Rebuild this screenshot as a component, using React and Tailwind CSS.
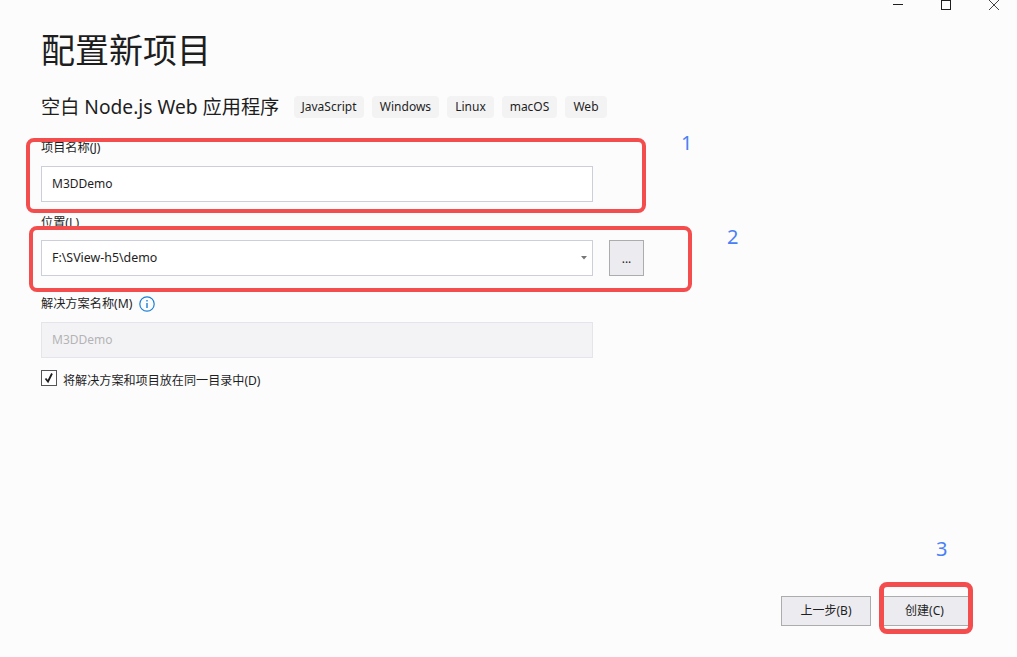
const font = { fontFamily: '"Noto Sans", "Noto Sans CJK SC", sans-serif' };

const tags = [
  { name: "JavaScript", width: "w-[70px]" },
  { name: "Windows", width: "w-[67px]" },
  { name: "Linux", width: "w-[47px]" },
  { name: "macOS", width: "w-[55px]" },
  { name: "Web", width: "w-[42px]" },
];

const Marker = ({ className }) => (
  <div className={`absolute border-[#f44d4d] rounded-lg ${className}`} />
);

const Number = ({ className, children }) => (
  <div className={`absolute text-[20px] leading-[24px] text-[#4a80f5] ${className}`}>{children}</div>
);

export default function App() {
  return (
    <div style={font} className="relative w-[1017px] h-[657px] overflow-hidden bg-[#fcfcfd] text-[#1e1e1e]">
      {/* Window buttons */}
      <div className="flex justify-end h-[10px] overflow-visible">
        <div className="flex items-start gap-[38px] pr-[18px]">
          <div className="w-[10px] h-px mt-[4px] bg-[#1e1e1e]" />
          <div className="w-[10px] h-[10px] border border-[#1e1e1e]" />
          <svg width="10" height="10" viewBox="0 0 10 10" className="text-[#444]">
            <path d="M0 0L10 10M10 0L0 10" stroke="currentColor" fill="none" />
          </svg>
        </div>
      </div>

      <div className="pl-[41px]">
        <h1 className="mt-[17px] text-[34px] leading-[46px] font-normal">配置新项目</h1>

        <div className="flex items-center mt-[23px] h-[22px]">
          <span className="text-[19.2px] leading-[24px] w-[253px] whitespace-nowrap">空白 Node.js Web 应用程序</span>
          <div className="flex gap-[8px]">
            {tags.map((tag) => (
              <span key={tag.name} className={`h-[22px] rounded-[4px] bg-[#f3f3f4] text-center text-[12px] leading-[22px] ${tag.width}`}>{tag.name}</span>
            ))}
          </div>
        </div>

        <label className="block mt-[22px] text-[12.2px] leading-[16px]">项目名称(J)</label>
        <div className="mt-[10px] w-[552px] h-[36px] px-[10px] border border-[#cccedb] bg-white text-[12px] leading-[34px]">M3DDemo</div>

        <label className="block mt-[13px] text-[12.2px] leading-[16px]">位置(L)</label>
        <div className="flex mt-[9px] gap-[16px]">
          <div className="flex items-center justify-between w-[552px] h-[36px] pl-[10px] pr-[5px] border border-[#cccedb] bg-white text-[12.4px]">
            <span>F:\SView-h5\demo</span>
            <svg width="6" height="4" viewBox="0 0 6 4"><path d="M0 0H6L3 3.5Z" fill="#777" /></svg>
          </div>
          <button className="w-[35px] h-[36px] border border-[#acacac] bg-[#ecebf0] text-[12px] leading-[36px]">...</button>
        </div>

        <div className="flex items-center gap-[6px] mt-[20px] h-[16px]">
          <label className="text-[12.2px] leading-[16px]">解决方案名称(M)</label>
          <svg width="16" height="16" viewBox="0 0 16 16" fill="none" stroke="#1b81d6">
            <circle cx="8" cy="8" r="7.2" strokeWidth="1.2" />
            <path d="M8 7V12" strokeWidth="1.4" />
            <path d="M8 4V5.5" strokeWidth="1.4" />
          </svg>
        </div>
        <div className="mt-[10px] w-[552px] h-[36px] px-[10px] border border-[#e4e4ea] bg-[#f3f3f6] text-[12px] leading-[34px] text-[#b4b4b4]">M3DDemo</div>

        <div className="flex items-center gap-[6px] mt-[12px] h-[16px]">
          <div className="flex items-center justify-center w-[16px] h-[16px] border border-[#555] bg-white">
            <svg width="12" height="12" viewBox="0 0 12 12" fill="none" stroke="#1e1e1e" strokeWidth="1.8">
              <path d="M2.5 6.5L5 9.5L9 1.5" />
            </svg>
          </div>
          <span className="pt-[6px] text-[12.1px] leading-[16px]">将解决方案和项目放在同一目录中(D)</span>
        </div>
      </div>

      {/* Footer buttons */}
      <div className="absolute right-[48px] bottom-[31px] flex gap-[12px]">
        <button className="w-[90px] h-[30px] border border-[#acacac] bg-[#ecebf0] text-[12px]">上一步(B)</button>
        <button className="w-[86px] h-[30px] pr-[3px] border border-[#acacac] bg-[#ecebf0] text-[12px]">创建(C)</button>
      </div>

      {/* Annotations */}
      <Marker className="left-[26px] top-[138px] w-[620px] h-[75px] border-4" />
      <Marker className="left-[29px] top-[226px] w-[663px] h-[66px] border-4" />
      <Marker className="left-[879px] top-[582px] w-[94px] h-[52px] border-[5px]" />
      <Number className="left-[681px] top-[131px]">1</Number>
      <Number className="left-[727px] top-[225px]">2</Number>
      <Number className="left-[936px] top-[537px]">3</Number>
    </div>
  );
}
